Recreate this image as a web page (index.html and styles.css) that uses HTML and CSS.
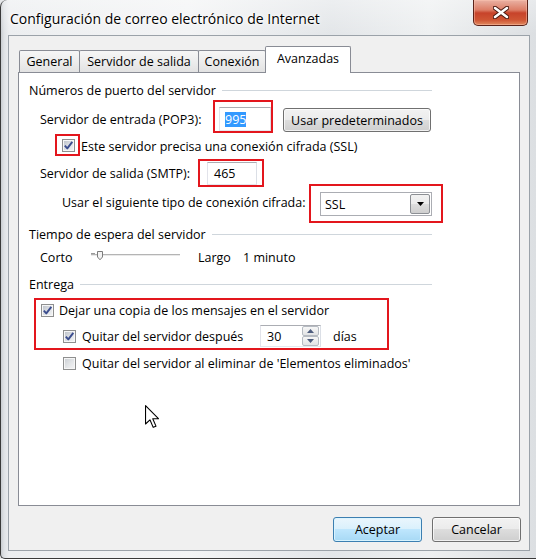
FILE: index.html
```html
<!DOCTYPE html>
<html lang="es">
<head>
<meta charset="utf-8">
<title>Configuración de correo electrónico de Internet</title>
<link rel="stylesheet" href="styles.css">
</head>
<body>
<div class="window">
  <div class="titlebar">
    <span class="title">Configuración de correo electrónico de Internet</span>
    <button class="close" aria-label="Cerrar">
      <svg width="16" height="13" viewBox="0 0 16 13"><path d="M2 2 L14 11 M14 2 L2 11" stroke="#4a1a12" stroke-width="4.6" stroke-linecap="round"/><path d="M2 2 L14 11 M14 2 L2 11" stroke="#ffffff" stroke-width="2.6" stroke-linecap="round"/></svg>
    </button>
  </div>
  <div class="client">
    <div class="tabs">
      <div class="tab tab-general">General</div>
      <div class="tab tab-salida">Servidor de salida</div>
      <div class="tab tab-conexion">Conexión</div>
      <div class="tab tab-avanzadas active">Avanzadas</div>
    </div>
    <div class="panel">
      <div class="gh gh1"><span>Números de puerto del servidor</span></div>
      <div class="row row-pop3">
        <span class="lbl lbl-pop3">Servidor de entrada (POP3):</span>
        <div class="redbox rb-pop3"><div class="field f-pop3"><span class="sel">995</span></div></div>
        <button class="btn btn-defaults">Usar predeterminados</button>
      </div>
      <div class="row row-ssl">
        <div class="redbox rb-ssl"><span class="cb"><svg width="11" height="11" viewBox="0 0 11 11"><path d="M1.8 5.6 L4.3 8.4 L9.3 1.9" fill="none" stroke="#3b4d8e" stroke-width="1.9" stroke-linejoin="round"/></svg></span></div>
        <span class="lbl lbl-ssl">Este servidor precisa una conexión cifrada (SSL)</span>
      </div>
      <div class="row row-smtp">
        <span class="lbl lbl-smtp">Servidor de salida (SMTP):</span>
        <div class="redbox rb-smtp"><div class="field f-smtp">465</div></div>
      </div>
      <div class="row row-enc">
        <span class="lbl lbl-enc">Usar el siguiente tipo de conexión cifrada:</span>
        <div class="redbox rb-enc">
          <div class="field select"><span>SSL</span><span class="drop"><svg width="7" height="4" viewBox="0 0 7 4"><path d="M0 0 H7 L3.5 4 Z" fill="#000"/></svg></span></div>
        </div>
      </div>
      <div class="gh gh2"><span>Tiempo de espera del servidor</span></div>
      <div class="row row-timeout">
        <span class="lbl lbl-corto">Corto</span>
        <svg class="slider" width="89" height="14" viewBox="0 0 89 14">
          <rect x="0" y="5" width="89" height="1" fill="#b4b4b4"/>
          <rect x="0" y="6" width="89" height="1" fill="#e9e9e9"/>
          <rect x="0" y="4" width="4" height="1" fill="#9a9a9a"/>
          <path d="M6.5 2.5 H11.5 V8 L9 10.8 L6.5 8 Z" fill="#f3f3f3" stroke="#7c7c7c"/>
        </svg>
        <span class="lbl lbl-largo">Largo</span>
        <span class="lbl">1 minuto</span>
      </div>
      <div class="gh gh3"><span>Entrega</span></div>
      <div class="redbox rb-deliver">
        <div class="row row-d1">
          <span class="cb"><svg width="11" height="11" viewBox="0 0 11 11"><path d="M1.8 5.6 L4.3 8.4 L9.3 1.9" fill="none" stroke="#3b4d8e" stroke-width="1.9" stroke-linejoin="round"/></svg></span>
          <span class="lbl">Dejar una copia de los mensajes en el servidor</span>
        </div>
        <div class="row row-d2">
          <span class="cb cb-wide"><svg width="11" height="11" viewBox="0 0 11 11"><path d="M1.8 5.6 L4.3 8.4 L9.3 1.9" fill="none" stroke="#3b4d8e" stroke-width="1.9" stroke-linejoin="round"/></svg></span>
          <span class="lbl lbl-after">Quitar del servidor después</span>
          <div class="field spin">
            <span>30</span>
            <span class="spin-btns">
              <span class="spin-btn"><svg width="7" height="4" viewBox="0 0 7 4"><path d="M0 4 H7 L3.5 0 Z" fill="#4e5d7e"/></svg></span>
              <span class="spin-btn"><svg width="7" height="4" viewBox="0 0 7 4"><path d="M0 0 H7 L3.5 4 Z" fill="#4e5d7e"/></svg></span>
            </span>
          </div>
          <span class="lbl lbl-dias">días</span>
        </div>
      </div>
      <div class="row row-d3">
        <span class="cb cb-wide"></span>
        <span class="lbl">Quitar del servidor al eliminar de 'Elementos eliminados'</span>
      </div>
      <svg class="cursor" width="14" height="24" viewBox="0 0 13 22"><path d="M0.5 0.5 V17.5 L4.6 13.6 L7.6 20.6 L10.2 19.5 L7.2 12.6 L12.5 12.6 Z" fill="#ffffff" stroke="#000" stroke-width="1" stroke-linejoin="round"/></svg>
    </div>
    <div class="actions">
      <button class="btn btn-dialog btn-default">Aceptar</button>
      <button class="btn btn-dialog">Cancelar</button>
    </div>
  </div>
</div>
</body>
</html>
```
FILE: styles.css
```css
* { box-sizing: border-box; }

body {
  margin: 0;
  font-family: "Open Sans", "Noto Sans", sans-serif;
  font-size: 12.5px;
  color: #000;
  background: #e6e8ea;
}

.window {
  width: 536px;
  height: 559px;
  border-left: 1px solid #3a3a3a;
  border-bottom: 1px solid #3a3a3a;
  border-top-left-radius: 7px;
  border-bottom-left-radius: 5px;
  overflow: hidden;
  background:
    linear-gradient(180deg, rgba(255,255,255,0.35) 0, rgba(255,255,255,0) 34px),
    linear-gradient(90deg, #c9cdd1 0, #dfe2e5 3px, #eceef0 8px, #f3f4f5 35%, #e3e6e9 62%, #eef0f1 80%, #dcdfe2 100%);
}

.titlebar {
  display: flex;
  align-items: flex-start;
  height: 35px;
}

.title {
  margin: 10px 0 0 9px;
  line-height: 17px;
  font-size: 14px;
  white-space: nowrap;
  text-shadow: 0 0 6px #fff, 0 0 3px #fff, 0 0 2px #fff;
}

.close {
  margin-left: auto;
  margin-right: 8px;
  width: 55px;
  height: 26px;
  padding: 0;
  border: 1px solid #5b2219;
  border-top: none;
  border-radius: 0 0 5px 5px;
  background: linear-gradient(180deg, #eab2a4 0, #dc7d66 40%, #c7432a 52%, #cf5534 80%, #e08a5f 100%);
  box-shadow: inset 0 0 0 1px rgba(255,200,180,0.45);
  display: flex;
  align-items: center;
  justify-content: center;
}

.client {
  margin: 0 6px 0 7px;
  height: 516px;
  border: 1px solid #9ba2a9;
  background: #f0f0f0;
  padding-top: 10px;
}

/* Tabs */
.tabs {
  display: flex;
  align-items: flex-end;
  height: 26px;
  padding-left: 10px;
}

.tab {
  flex: none;
  height: 22px;
  line-height: 21px;
  text-align: center;
  border: 1px solid #898c95;
  border-bottom: none;
  border-radius: 2px 2px 0 0;
  background: linear-gradient(180deg, #f6f6f6 0, #ececec 55%, #e2e2e2 100%);
  white-space: nowrap;
}

.tab + .tab { margin-left: -1px; }

.tab-general { width: 61px; }
.tab-salida { width: 120px; }
.tab-conexion { width: 68px; }
.tab-avanzadas { width: 86px; }

.tab.active {
  position: relative;
  z-index: 1;
  height: 27px;
  margin-bottom: -1px;
  line-height: 24px;
  background: #fff;
}

.panel {
  position: relative;
  margin-left: 9px;
  width: 502px;
  height: 434px;
  border: 1px solid #898c95;
  background: #fff;
}

/* Group headings */
.gh {
  display: flex;
  align-items: center;
  width: 403px;
  height: 17px;
  margin-left: 10px;
  line-height: 17px;
  white-space: nowrap;
}

.gh::after {
  content: "";
  flex: 1;
  height: 1px;
  margin-left: 6px;
  background: #cfd6dc;
}

.gh1 { margin-top: 9px; }
.gh2 { margin-top: 3px; }
.gh3 { margin-top: 10px; }

/* Rows */
.row {
  display: flex;
  align-items: flex-start;
}

.lbl {
  flex: none;
  line-height: 17px;
  white-space: nowrap;
}

.redbox {
  flex: none;
  border: 2px solid #e3161d;
}

.field {
  display: flex;
  align-items: center;
  border: 1px solid;
  border-color: #abadb3 #dbdfe6 #e3e9ef #e2e3ea;
  background: #fff;
  padding-left: 5px;
  white-space: nowrap;
}

.sel {
  background: #3399ff;
  color: #fff;
  line-height: 15px;
}

.row-pop3 { margin-top: 1px; height: 33px; padding-left: 21px; }
.lbl-pop3 { width: 173px; margin-top: 11px; }
.rb-pop3 { width: 60px; height: 33px; padding: 5px 0 0 4px; }
.f-pop3 { width: 52px; height: 24px; }

.btn {
  font: inherit;
  color: #000;
  height: 25px;
  padding: 0;
  border: 1px solid #707070;
  border-radius: 3px;
  background: linear-gradient(180deg, #f2f2f2 0, #ebebeb 50%, #dddddd 50%, #cfcfcf 100%);
  box-shadow: inset 0 0 0 1px rgba(255,255,255,0.7);
  white-space: nowrap;
}

.btn-defaults { width: 148px; height: 24px; margin: 8px 0 0 10px; flex: none; }

.row-ssl { margin-top: 1px; height: 22px; padding-left: 36px; }
.rb-ssl { width: 25px; height: 22px; padding: 3px 0 0 5px; }
.lbl-ssl { margin: 4px 0 0 1px; }

.row-smtp { margin-top: 3px; height: 28px; padding-left: 21px; }
.lbl-smtp { width: 158px; margin-top: 6px; }
.rb-smtp { width: 66px; height: 28px; padding: 1px 0 0 7px; }
.f-smtp { width: 50px; height: 23px; padding-left: 6px; }

.row-enc { margin-top: -3px; height: 39px; padding-left: 43px; }
.lbl-enc { width: 247px; margin-top: 10px; }
.rb-enc { width: 134px; height: 39px; padding: 6px 0 0 9px; }

.select {
  width: 112px;
  height: 24px;
  justify-content: space-between;
  padding: 0 1px 0 4px;
  border-color: #abadb3;
}

.drop {
  display: flex;
  align-items: center;
  justify-content: center;
  width: 20px;
  height: 20px;
  border: 1px solid #8c8f94;
  border-radius: 2px;
  background: linear-gradient(180deg, #f2f2f2 0, #ebebeb 50%, #dddddd 50%, #cfcfcf 100%);
}

.row-timeout { margin-top: 6px; height: 17px; padding-left: 21px; }
.lbl-corto { width: 51px; }
.slider { flex: none; margin-right: 18px; }
.lbl-largo { width: 45px; }

/* Checkboxes */
.cb {
  flex: none;
  display: block;
  width: 13px;
  height: 13px;
  border: 1px solid #8e8f8f;
  background: linear-gradient(135deg, #b9bec6 0, #dfe2e6 55%, #f4f5f6 100%);
  box-shadow: inset 0 0 0 1px #f6f6f6;
}

.cb svg { display: block; }

.rb-deliver {
  width: 355px;
  height: 52px;
  margin: 5px 0 0 15px;
  padding: 2px 0 0 5px;
}

.row-d1 { height: 17px; align-items: center; }
.row-d1 .cb { margin-right: 5px; }

.row-d2 { margin-top: 6px; height: 22px; padding-left: 22px; align-items: center; }
.cb-wide { margin-right: 6px; }
.lbl-after { width: 178px; }

.spin {
  flex: none;
  width: 61px;
  height: 22px;
  justify-content: space-between;
  padding: 0 1px 0 6px;
}

.spin-btns {
  display: flex;
  flex-direction: column;
  width: 17px;
  height: 20px;
}

.spin-btn {
  flex: 1;
  display: flex;
  align-items: center;
  justify-content: center;
  border: 1px solid #b6bbc2;
  border-radius: 2px;
  background: linear-gradient(180deg, #f7f7f7 0, #e2e3e5 100%);
}

.spin-btn svg { display: block; }

.lbl-dias { margin-left: 12px; }

.row-d3 { margin-top: 5px; height: 17px; padding-left: 44px; align-items: center; }

.row-d3 .cb {
  background: linear-gradient(135deg, #c9cdd2 0, #e4e6e8 55%, #f5f5f6 100%);
}

.cursor {
  position: absolute;
  left: 126px;
  top: 332px;
}

/* Dialog buttons */
.actions {
  display: flex;
  justify-content: flex-end;
  gap: 10px;
  margin-top: 11px;
  padding-right: 8px;
}

.btn-dialog { width: 89px; }

.btn-default {
  border-color: #3c7fb1;
  background: linear-gradient(180deg, #eaf6fd 0, #d9f0fc 50%, #bee6fd 50%, #a7d9f5 100%);
  box-shadow: inset 0 0 0 1px rgba(220,245,255,0.9);
}
```
